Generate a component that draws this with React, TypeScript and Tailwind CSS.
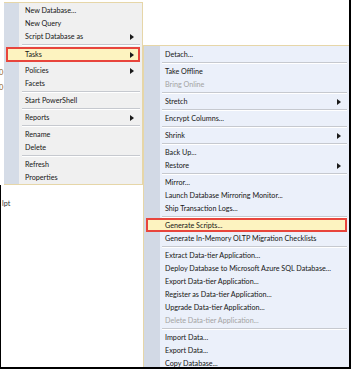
import React from "react";

type Item =
  | { label: string; arrow?: boolean; disabled?: boolean; hot?: boolean }
  | "sep"
  | "gap";

const mainItems: Item[] = [
  { label: "New Database..." },
  { label: "New Query" },
  { label: "Script Database as", arrow: true },
  "sep",
  { label: "Tasks", arrow: true, hot: true },
  "gap",
  { label: "Policies", arrow: true },
  { label: "Facets" },
  "sep",
  { label: "Start PowerShell" },
  "sep",
  { label: "Reports", arrow: true },
  "sep",
  { label: "Rename" },
  { label: "Delete" },
  "sep",
  { label: "Refresh" },
  { label: "Properties" },
];

const taskItems: Item[] = [
  { label: "Detach..." },
  "sep",
  { label: "Take Offline" },
  { label: "Bring Online", disabled: true },
  "sep",
  { label: "Stretch", arrow: true },
  "sep",
  { label: "Encrypt Columns..." },
  "sep",
  { label: "Shrink", arrow: true },
  "sep",
  { label: "Back Up..." },
  { label: "Restore", arrow: true },
  "sep",
  { label: "Mirror..." },
  { label: "Launch Database Mirroring Monitor..." },
  { label: "Ship Transaction Logs..." },
  "sep",
  { label: "Generate Scripts...", hot: true },
  { label: "Generate In-Memory OLTP Migration Checklists" },
  "sep",
  { label: "Extract Data-tier Application..." },
  { label: "Deploy Database to Microsoft Azure SQL Database..." },
  { label: "Export Data-tier Application..." },
  { label: "Register as Data-tier Application..." },
  { label: "Upgrade Data-tier Application..." },
  { label: "Delete Data-tier Application...", disabled: true },
  "sep",
  { label: "Import Data..." },
  { label: "Export Data..." },
  { label: "Copy Database..." },
];

const Arrow = () => (
  <svg width="4" height="6" viewBox="0 0 4 6" className="shrink-0">
    <polygon points="0,0 4,3 0,6" fill="#1a1a1a" />
  </svg>
);

interface MenuProps {
  items: Item[];
  hotHeight: number;
}

const MenuRows = ({ items, hotHeight }: MenuProps) => {
  return (
    <div className="flex flex-col">
      {items.map((it, i) => {
        if (it === "sep") {
          const nextHot = typeof items[i + 1] === "object" && (items[i + 1] as any).hot;
          return (
            <div key={i} className={`flex items-center pl-[18px] pr-[2px] ${nextHot && hotHeight === 14 ? "h-[3px]" : "h-[4px]"}`}>
              <div className="h-[2px] w-full border-t border-[#c6c9cf] border-b border-b-white" />
            </div>
          );
        }
        if (it === "gap") return <div key={i} className="h-[2px]" />;
        return (
          <div
            key={i}
            className={`mx-[2px] flex items-center justify-between border-2 pl-[17px] pr-[4px] ${
              it.hot ? "border-[#e8453c] bg-[#fdf3c0]" : "border-transparent"
            } ${it.hot ? (hotHeight === 15 ? "h-[15px]" : "h-[14px]") : "h-[13px]"}`}
          >
            <span
              className={`whitespace-nowrap text-[7.2px] leading-[13px] ${
                it.disabled ? "text-[#a3a3a3]" : "text-[#161616]"
              }`}
            >
              {it.label}
            </span>
            {it.arrow && <Arrow />}
          </div>
        );
      })}
    </div>
  );
};

export default function App() {
  return (
    <div
      className="w-[351px] h-[369px] overflow-hidden bg-white border-r-2 border-b-2 border-black flex"
      style={{ fontFamily: 'Lato, "Noto Sans", sans-serif' }}
    >
      {/* left column: tree peeking + context menu */}
      <div className="flex flex-col w-[143px] shrink-0">
        <div className="flex">
          <div className="w-[4px] shrink-0 overflow-hidden flex flex-col text-[7.5px] leading-[13px] text-[#8a5a1c]">
            <div className="h-[66px]" />
            <span className="-ml-[1px]">0</span>
            <span className="-ml-[1px] mt-[2px]">0</span>
          </div>
          <div className="mt-[2px] w-[139px] bg-[#f0f0f0] border-t border-r border-b border-[#e6d6a8] relative">
            <div className="absolute left-0 top-0 bottom-0 w-[15px] bg-[#d5dce7]" />
            <div className="relative pt-[1px]">
              <MenuRows items={mainItems} hotHeight={15} />
            </div>
          </div>
        </div>
        <div className="flex-1 border-l border-black pl-[1px] pt-[3px]">
          <span className="text-[7.2px] leading-[13px] text-[#333]">lpt</span>
        </div>
      </div>

      {/* Tasks submenu */}
      <div className="mt-[45px] w-[206px] shrink-0 bg-[#ebf0fa] border-t border-l border-[#e6d6a8] relative">
        <div className="absolute left-0 top-0 bottom-0 w-[16px] bg-[#d2d9e5]" />
        <div className="relative pt-[2px]">
          <MenuRows items={taskItems} hotHeight={14} />
        </div>
      </div>
    </div>
  );
}
